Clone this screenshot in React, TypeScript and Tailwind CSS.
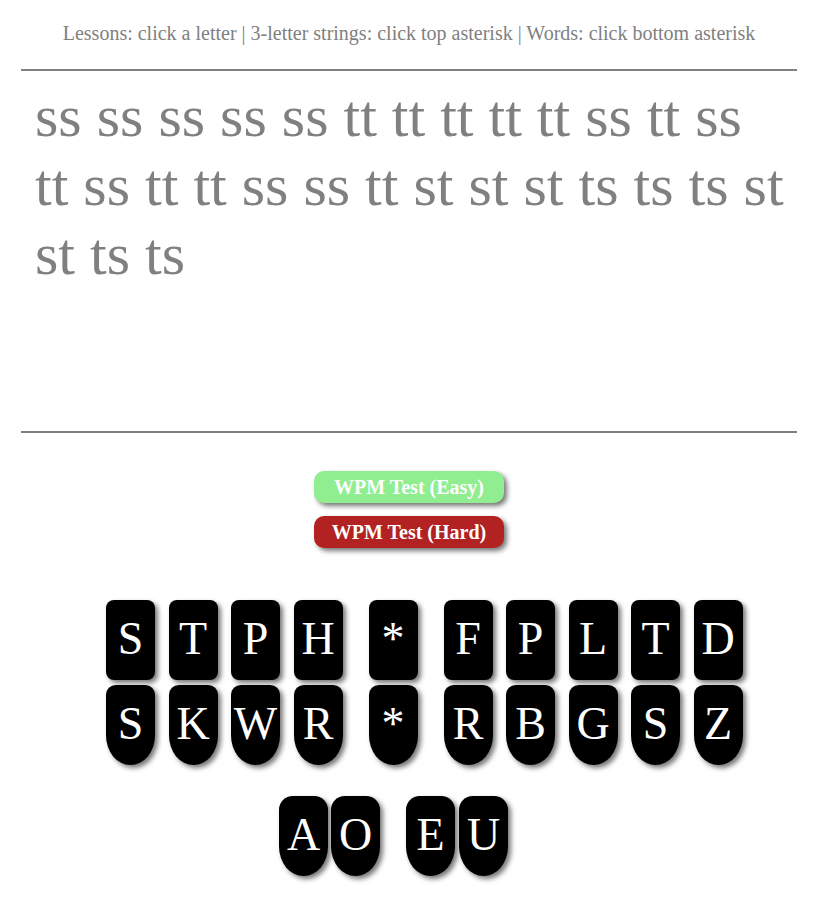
const lessonText =
  "ss ss ss ss ss tt tt tt tt tt ss tt ss tt ss tt tt ss ss tt st st st ts ts ts st st ts ts";

const leftKeys = ["S", "T", "P", "H"];
const rightKeysTop = ["F", "P", "L", "T", "D"];
const leftKeysBottom = ["S", "K", "W", "R"];
const rightKeysBottom = ["R", "B", "G", "S", "Z"];

function Key({ label, shape }: { label: string; shape: "top" | "bottom" | "vowel" }) {
  const shapeClass =
    shape === "top"
      ? "rounded-[8px]"
      : shape === "bottom"
        ? "rounded-t-[10px] rounded-bl-[25px_30px] rounded-br-[25px_30px]"
        : "rounded-t-[14px] rounded-bl-[25px_30px] rounded-br-[25px_30px]";
  return (
    <div
      className={`w-[49px] h-[80px] bg-black text-white flex justify-center pt-[16px] text-[46px] leading-[46px] shadow-[3px_3px_5px_#777] cursor-pointer select-none ${shapeClass}`}
    >
      {label}
    </div>
  );
}

export default function App() {
  return (
    <div className="min-h-[909px] bg-white font-['Liberation_Serif','Times_New_Roman',serif]">
      <div className="w-[776px] ml-[21px]">
        <div className="pt-[22px] text-center text-[20px] leading-[23px] text-[#808080]">
          Lessons: click a letter | 3-letter strings: click top asterisk | Words: click bottom asterisk
        </div>
        <div className="mt-[24px] h-[2px] bg-[#808080]" />
        <div className="h-[360px] pt-[11px] pl-[14px] pr-[11px] text-[60px] leading-[69px] text-[#808080]">
          {lessonText}
        </div>
        <div className="h-[2px] bg-[#808080]" />
        <div className="mt-[38px] flex flex-col items-center gap-[13px]">
          <button className="w-[190px] h-[32px] rounded-[10px] bg-[#90ee90] text-white font-bold text-[20px] leading-[22px] shadow-[3px_3px_5px_#777]">
            WPM Test (Easy)
          </button>
          <button className="w-[190px] h-[32px] rounded-[10px] bg-[#b22222] text-white font-bold text-[20px] leading-[22px] shadow-[3px_3px_5px_#777]">
            WPM Test (Hard)
          </button>
        </div>
      </div>

      <div className="mt-[52px] pl-[106px] flex flex-col gap-[5px]">
        <div className="flex">
          <div className="flex gap-[13.5px]">
            {leftKeys.map((k, i) => (
              <Key key={i} label={k} shape="top" />
            ))}
          </div>
          <div className="mx-[26px]">
            <Key label="*" shape="top" />
          </div>
          <div className="flex gap-[13.5px]">
            {rightKeysTop.map((k, i) => (
              <Key key={i} label={k} shape="top" />
            ))}
          </div>
        </div>
        <div className="flex">
          <div className="flex gap-[13.5px]">
            {leftKeysBottom.map((k, i) => (
              <Key key={i} label={k} shape="bottom" />
            ))}
          </div>
          <div className="mx-[26px]">
            <Key label="*" shape="bottom" />
          </div>
          <div className="flex gap-[13.5px]">
            {rightKeysBottom.map((k, i) => (
              <Key key={i} label={k} shape="bottom" />
            ))}
          </div>
        </div>
      </div>

      <div className="mt-[31px] pl-[279px] flex">
        <div className="flex gap-[3px]">
          <Key label="A" shape="vowel" />
          <Key label="O" shape="vowel" />
        </div>
        <div className="ml-[26px] flex gap-[4px]">
          <Key label="E" shape="vowel" />
          <Key label="U" shape="vowel" />
        </div>
      </div>
    </div>
  );
}
